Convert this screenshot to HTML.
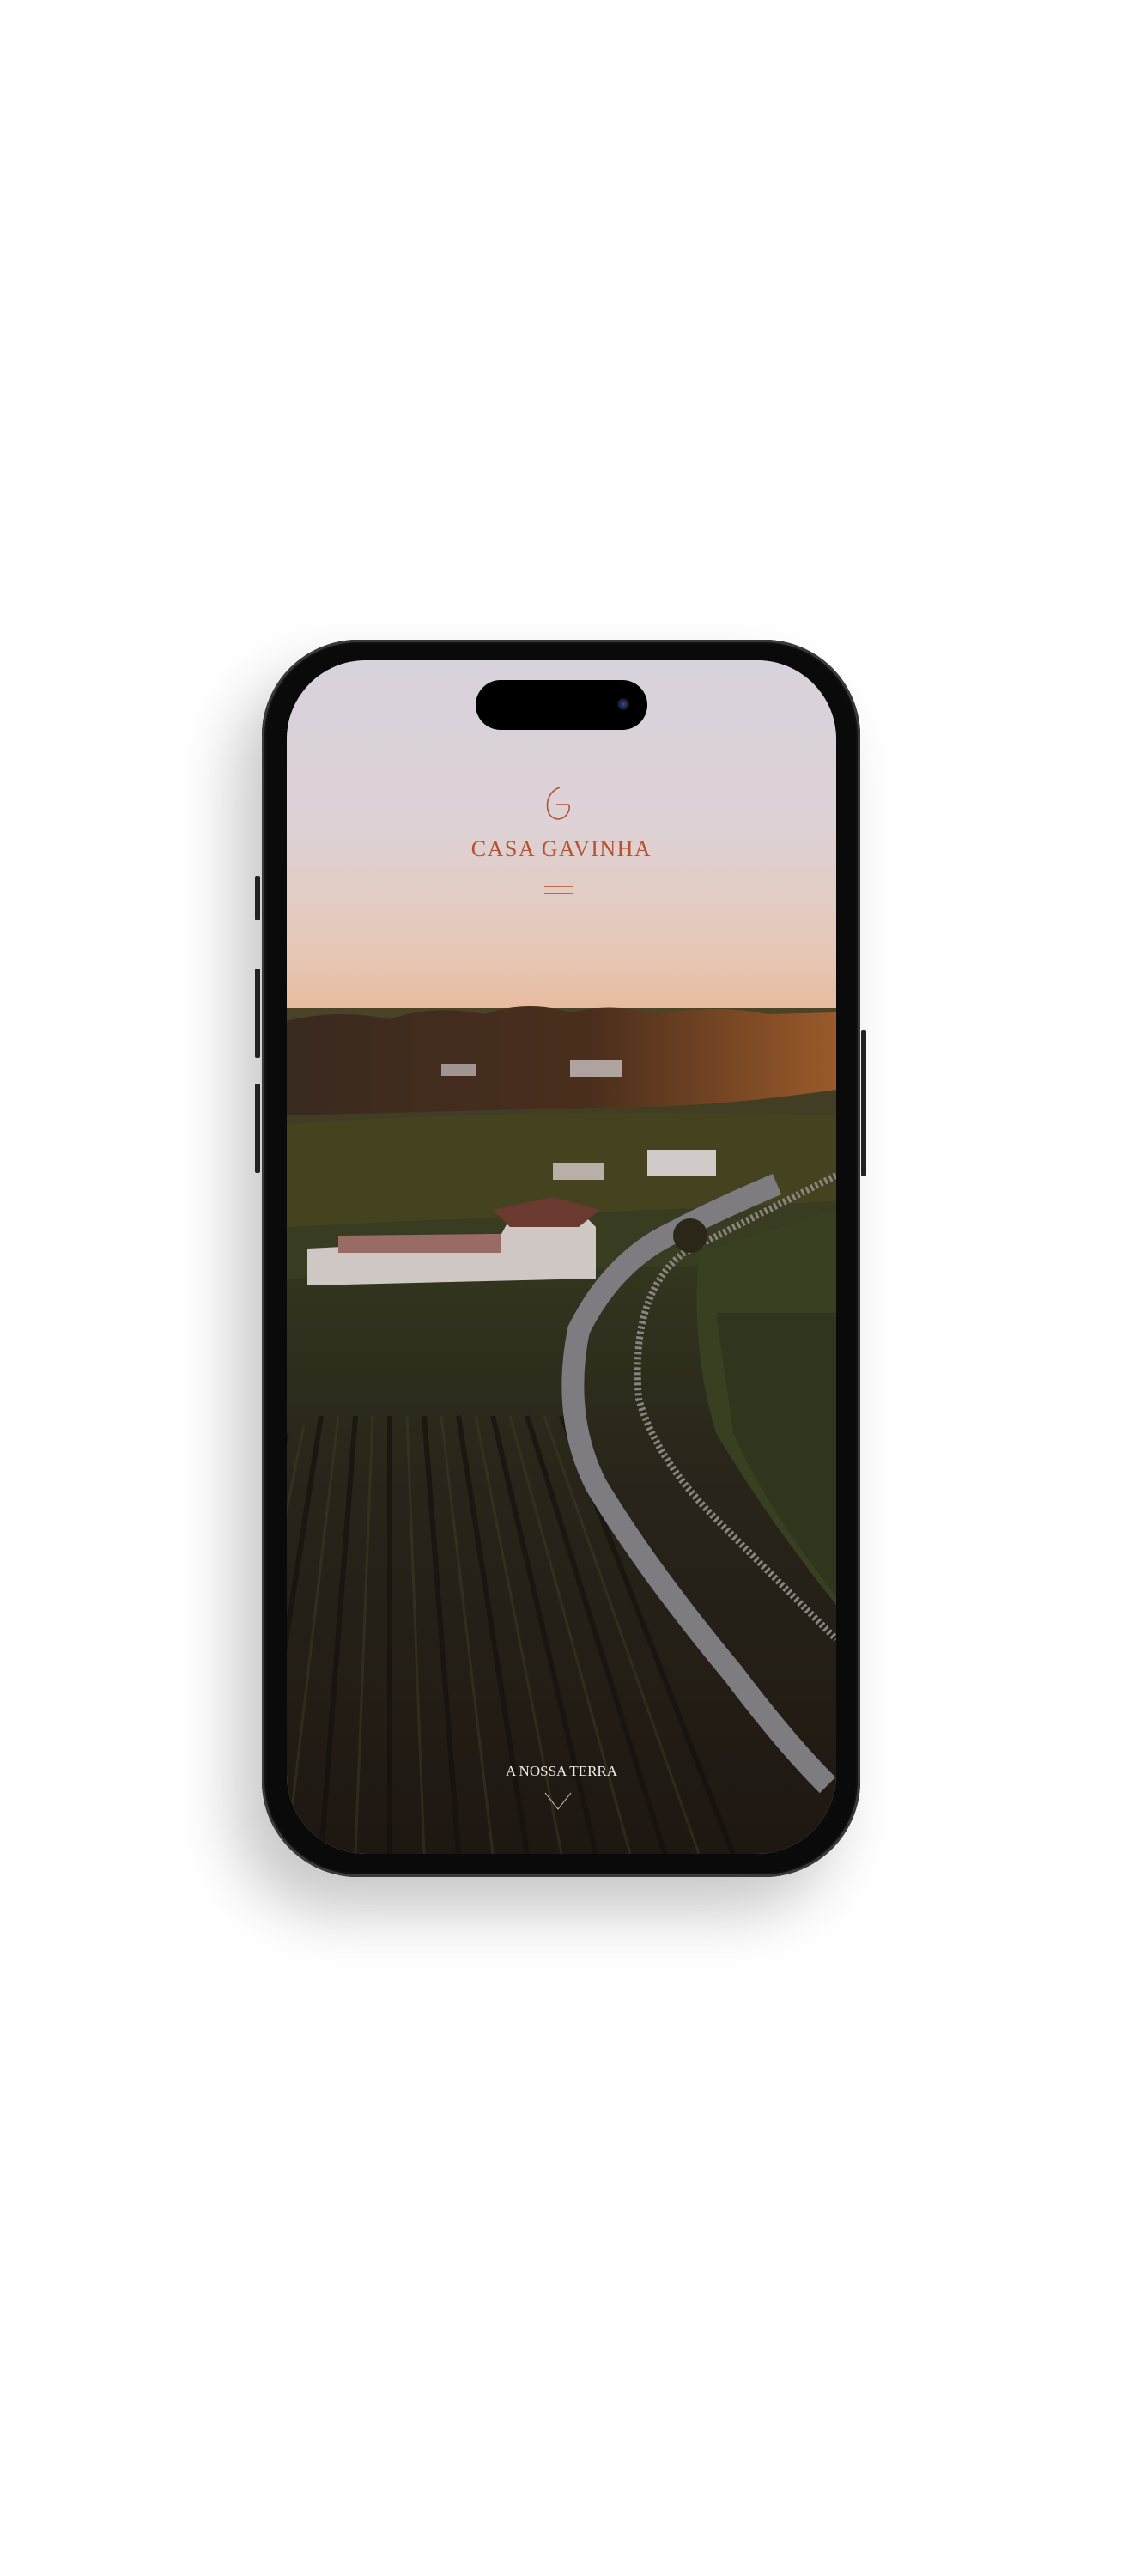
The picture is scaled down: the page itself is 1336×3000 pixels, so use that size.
<!DOCTYPE html>
<html><head><meta charset="utf-8"><style>
html,body{margin:0;padding:0;background:#fff;}
body{width:1336px;height:3000px;position:relative;overflow:hidden;font-family:"Liberation Serif",serif;}
.phone{position:absolute;left:305px;top:745px;width:697px;height:1441px;border-radius:112px;background:#0a0a0a;box-shadow:inset 0 0 0 3px #3a3a3c,inset 0 0 0 5px #111,-30px 40px 70px rgba(0,0,0,.22);}
.btn{position:absolute;background:#222;border-radius:2px;width:6px;}
.screen{position:absolute;left:334px;top:769px;width:640px;height:1390px;border-radius:92px;overflow:hidden;background:#d9d3dc;}
.island{position:absolute;left:554px;top:792px;width:200px;height:58px;border-radius:29px;background:#000;}
.cam{position:absolute;left:719px;top:813px;width:14px;height:14px;border-radius:50%;background:radial-gradient(#3a4a8a,#101020 70%);}
.title{position:absolute;left:0;width:1308px;text-align:center;color:#b8502e;}
</style></head><body>
<div class="phone"></div>
<div class="btn" style="left:297px;top:1020px;height:52px"></div>
<div class="btn" style="left:297px;top:1128px;height:104px"></div>
<div class="btn" style="left:297px;top:1262px;height:104px"></div>
<div class="btn" style="left:1003px;top:1200px;height:170px"></div>
<div class="screen">
<svg width="640" height="1390" viewBox="0 0 640 1390">
<defs>
<linearGradient id="sky" x1="0" y1="0" x2="0" y2="1">
<stop offset="0" stop-color="#d8d2dc"/><stop offset="0.45" stop-color="#ddd2d6"/><stop offset="0.8" stop-color="#e6c8b8"/><stop offset="1" stop-color="#e8b898"/></linearGradient>
<linearGradient id="trees" x1="0" y1="0" x2="1" y2="0">
<stop offset="0" stop-color="#3a2a20"/><stop offset="0.55" stop-color="#4a2e1c"/><stop offset="1" stop-color="#9a5a2a"/></linearGradient>
<linearGradient id="ground" x1="0" y1="0" x2="0" y2="1">
<stop offset="0" stop-color="#4a4328"/><stop offset="0.3" stop-color="#33361f"/><stop offset="0.55" stop-color="#29251a"/><stop offset="1" stop-color="#1e1712"/></linearGradient>
</defs>
<rect width="640" height="420" fill="url(#sky)"/>
<rect y="405" width="640" height="985" fill="url(#ground)"/>
<path d="M0 420 Q60 405 120 418 Q170 400 230 412 Q280 395 330 410 Q380 398 430 412 Q500 400 560 412 L640 410 L640 500 Q500 520 400 520 L0 530Z" fill="url(#trees)"/>
<path d="M0 540 Q300 520 640 530 L640 640 Q400 650 0 660Z" fill="#45421f"/>
<path d="M0 660 L640 630 L640 700 L0 720Z" fill="#383c20"/>
<path d="M480 690 L640 640 L640 1100 Q560 1000 500 900 Q470 800 480 690Z" fill="#394021"/>
<path d="M500 760 L640 760 L640 1090 Q560 990 520 900Z" fill="#30361e"/>
<g stroke="#15110d" stroke-width="6" opacity=".7">
<line x1="0" y1="900" x2="-120" y2="1390"/><line x1="40" y1="880" x2="-40" y2="1390"/><line x1="80" y1="880" x2="40" y2="1390"/><line x1="120" y1="880" x2="120" y2="1390"/><line x1="160" y1="880" x2="200" y2="1390"/><line x1="200" y1="880" x2="280" y2="1390"/><line x1="240" y1="880" x2="360" y2="1390"/><line x1="280" y1="880" x2="440" y2="1390"/><line x1="320" y1="880" x2="520" y2="1390"/>
</g>
<g stroke="#3e3d24" stroke-width="3" opacity=".5">
<line x1="20" y1="890" x2="-80" y2="1390"/><line x1="60" y1="880" x2="0" y2="1390"/><line x1="100" y1="880" x2="80" y2="1390"/><line x1="140" y1="880" x2="160" y2="1390"/><line x1="180" y1="880" x2="240" y2="1390"/><line x1="220" y1="880" x2="320" y2="1390"/><line x1="260" y1="880" x2="400" y2="1390"/><line x1="300" y1="880" x2="480" y2="1390"/>
</g>
<path d="M571 610 Q500 640 449 667 Q380 700 340 780 Q320 880 360 960 Q420 1060 520 1180 Q580 1260 630 1310" stroke="#7e7c80" stroke-width="26" fill="none"/>
<path d="M640 600 Q560 640 461 691 Q400 740 410 860 Q430 930 500 1000 Q580 1080 640 1140" stroke="#8a8480" stroke-width="8" fill="none" stroke-dasharray="3 3"/>
<path d="M24 685 L130 680 L140 670 L250 668 L260 650 L340 640 L360 660 L360 720 L24 728Z" fill="#cfc7c3"/>
<path d="M60 670 L250 668 L250 690 L60 690Z" fill="#9a6a64"/>
<path d="M240 640 L310 625 L365 640 L340 660 L260 660Z" fill="#6a3a30"/>
<rect x="420" y="570" width="80" height="30" fill="#d0cac8"/>
<rect x="310" y="585" width="60" height="20" fill="#b8b0a8"/>
<rect x="180" y="470" width="40" height="14" fill="#b8b0b0" opacity=".8"/>
<rect x="330" y="465" width="60" height="20" fill="#c8c0c0" opacity=".8"/>
<circle cx="470" cy="670" r="20" fill="#2a2618"/>
</svg>
</div>
<div class="island"></div><div class="cam"></div>
<svg style="position:absolute;left:630px;top:915px" width="40" height="44" viewBox="0 0 40 44"><path d="M22 2 C10 6 6 18 8 28 C10 38 20 42 28 36 C34 30 34 24 32 22 L18 22" fill="none" stroke="#b8502e" stroke-width="1.6"/></svg>
<div class="title" style="top:974px;font-size:26px;letter-spacing:1.5px;">CASA GAVINHA</div>
<div style="position:absolute;left:634px;top:1032px;width:34px;height:1px;background:#c46a4a"></div>
<div style="position:absolute;left:634px;top:1040px;width:34px;height:1px;background:#c46a4a"></div>
<div class="title" style="top:2053px;font-size:17px;color:#f2ece6;">A NOSSA TERRA</div>
<svg style="position:absolute;left:634px;top:2087px" width="32" height="22" viewBox="0 0 32 22"><path d="M1 1 L16 20 L31 1" fill="none" stroke="#d8d0c8" stroke-width="1"/></svg>
</body></html>
